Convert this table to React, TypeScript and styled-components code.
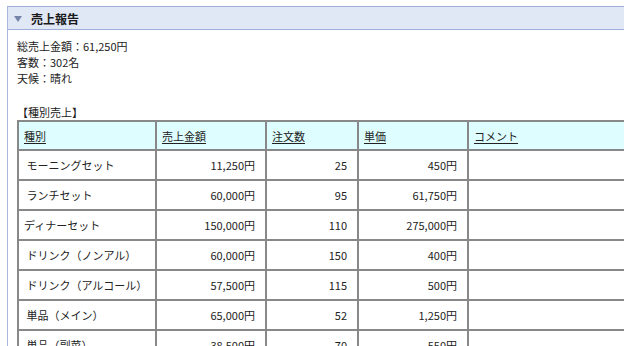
import * as React from "react";
import styled, { createGlobalStyle } from "styled-components";

const GlobalStyle = createGlobalStyle`
  html, body {
    margin: 0;
    padding: 0;
    background: #fff;
    overflow: hidden;
  }
  body {
    font-family: "Noto Sans CJK JP", "Noto Sans", sans-serif;
    font-size: 11px;
    color: #222;
  }
`;

const Page = styled.div`
  padding: 6px 0 0 7px;
  width: 760px;
`;

const Panel = styled.section`
  border-top: 1px solid #9eaed9;
  border-left: 1px solid #a9b5dd;
  min-height: 400px;
`;

const PanelHeader = styled.div`
  display: flex;
  align-items: center;
  gap: 9px;
  height: 22px;
  padding-left: 6px;
  background: #e0e8f5;
  border-bottom: 1px solid #9eaed9;
`;

const Toggle = styled.span`
  width: 0;
  height: 0;
  border-left: 4px solid transparent;
  border-right: 4px solid transparent;
  border-top: 6px solid #7585aa;
  margin-top: 1px;
`;

const Title = styled.h2`
  margin: 0;
  font-size: 12px;
  font-weight: bold;
  color: #1a1a1a;
`;

const Body = styled.div`
  padding: 8px 0 0 9px;
`;

const Line = styled.div`
  line-height: 16px;
  white-space: pre;
`;

const Caption = styled.div`
  margin-top: 18px;
  line-height: 16px;
`;

const Table = styled.table`
  border-collapse: collapse;
  table-layout: fixed;
  width: 672px;
`;

const Th = styled.th<{ $w: number }>`
  width: ${(p) => p.$w}px;
  height: 27px;
  padding: 0 5px;
  background: #ddfdff;
  border: 2px solid #888;
  text-align: left;
  font-weight: normal;
`;

const HeadLink = styled.a`
  color: #222;
  text-decoration: underline;
  text-underline-offset: 2px;
`;

const Td = styled.td<{ $num?: boolean }>`
  height: 28px;
  padding: ${(p) => (p.$num ? "0 10px 0 5px" : "0 5px")};
  border: 2px solid #888;
  text-align: ${(p) => (p.$num ? "right" : "left")};
  white-space: pre;
`;

// widths are content widths: cell span minus 10px padding and 2px border
const columns = [
  { label: "種別", w: 126 },
  { label: "売上金額", w: 98 },
  { label: "注文数", w: 80 },
  { label: "単価", w: 98 },
  { label: "コメント", w: 208 },
];

const rows = [
  [" モーニングセット", "11,250円", "25", "450円"],
  [" ランチセット", "60,000円", "95", "61,750円"],
  ["ディナーセット", "150,000円", "110", "275,000円"],
  [" ドリンク（ノンアル）", "60,000円", "150", "400円"],
  [" ドリンク（アルコール）", "57,500円", "115", "500円"],
  [" 単品（メイン）", "65,000円", "52", "1,250円"],
  [" 単品（副菜）", "38,500円", "70", "550円"],
];

export default function App() {
  return (
    <>
      <GlobalStyle />
      <Page>
        <Panel>
          <PanelHeader>
            <Toggle />
            <Title>売上報告</Title>
          </PanelHeader>
          <Body>
            <Line>総売上金額：61,250円</Line>
            <Line>客数：302名</Line>
            <Line>天候：晴れ</Line>
            <Caption>【種別売上】</Caption>
            <Table>
              <thead>
                <tr>
                  {columns.map((c) => (
                    <Th key={c.label} $w={c.w}>
                      <HeadLink href="#">{c.label}</HeadLink>
                    </Th>
                  ))}
                </tr>
              </thead>
              <tbody>
                {rows.map((r) => (
                  <tr key={r[0]}>
                    <Td>{r[0]}</Td>
                    <Td $num>{r[1]}</Td>
                    <Td $num>{r[2]}</Td>
                    <Td $num>{r[3]}</Td>
                    <Td />
                  </tr>
                ))}
              </tbody>
            </Table>
          </Body>
        </Panel>
      </Page>
    </>
  );
}
